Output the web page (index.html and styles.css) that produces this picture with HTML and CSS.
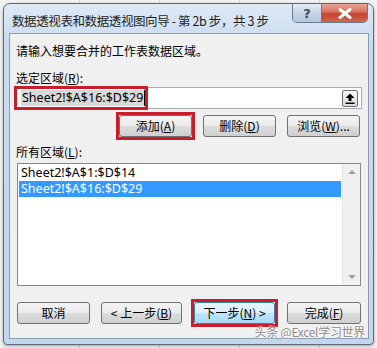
FILE: index.html
```html
<!DOCTYPE html>
<html lang="zh-CN">
<head>
    <meta charset="UTF-8">
    <title>数据透视表和数据透视图向导</title>
    <link rel="stylesheet" href="styles.css">
</head>
<body>
    <div class="window">
        <!-- Title bar with help and close buttons -->
        <div class="titlebar">
            <span class="title">数据透视表和数据透视图向导 - 第 2b 步，共 3 步</span>
            <div class="caption">
                <span class="cap-help">?</span>
                <span class="cap-close">
                    <svg width="14" height="11" viewBox="0 0 14 11"><path d="M2 1.5 L12 9.5 M12 1.5 L2 9.5" stroke="#fff" stroke-width="3" stroke-linecap="round"/></svg>
                </span>
            </div>
        </div>

        <div class="client">
            <p class="intro">请输入想要合并的工作表数据区域。</p>

            <div class="label">选定区域(<u>R</u>):</div>
            <div class="range-row">
                <div class="range-input">
                    <span class="sel">Sheet2!$A$16:$D$29</span><span class="caret"></span>
                    <span class="mark mark-input"></span>
                </div>
                <span class="pick">
                    <svg width="10" height="11" viewBox="0 0 10 11"><path d="M5 0.5 L9.5 5 H6.5 V8 H3.5 V5 H0.5 Z" fill="#000"/><rect x="0.5" y="9.5" width="9" height="1.5" fill="#000"/></svg>
                </span>
            </div>

            <div class="btn-row">
                <span class="mark-btn"><button class="btn">添加(<u>A</u>)</button></span>
                <button class="btn">删除(<u>D</u>)</button>
                <button class="btn">浏览(<u>W</u>)...</button>
            </div>

            <div class="label label-list">所有区域(<u>L</u>):</div>
            <div class="listbox">
                <div class="items">
                    <div class="item">Sheet2!$A$1:$D$14</div>
                    <div class="item selected">Sheet2!$A$16:$D$29</div>
                </div>
                <div class="scrollbar">
                    <span class="arrow up"></span>
                    <span class="arrow down"></span>
                </div>
            </div>

            <div class="footer">
                <button class="btn">取消</button>
                <button class="btn wide">&lt; 上一步(<u>B</u>)</button>
                <span class="mark-btn next"><button class="btn wide primary">下一步(<u>N</u>) &gt;</button></span>
                <button class="btn finish">完成(<u>F</u>)</button>
            </div>
        </div>

        <span class="watermark">头条 @Excel学习世界</span>
    </div>
</body>
</html>
```

FILE: styles.css
```css
/* Spreadsheet behind the dialog */
body {
    margin: 0;
    width: 377px;
    height: 348px;
    overflow: hidden;
    background-color: #f2f2f2;
    background-image: repeating-linear-gradient(90deg, transparent 0, transparent 79px, #d6d6d6 79px, #d6d6d6 80px);
    font-family: "Noto Sans CJK SC", sans-serif;
    font-size: 12px;
    color: #000;
}

/* Dialog frame */
.window {
    position: relative;
    box-sizing: border-box;
    width: 371px;
    height: 342px;
    margin: 3px 0 0 3px;
    border: 1px solid #5c6b7c;
    border-radius: 7px 7px 4px 4px;
    background: linear-gradient(#dfe9f5, #c9dbef 40px, #c4d7ee);
    padding: 0 4px 5px 5px;
    display: flex;
    flex-direction: column;
    box-shadow: 0 1px 3px rgba(0,0,0,0.35);
}

.titlebar {
    height: 29px;
    display: flex;
    align-items: flex-start;
    justify-content: space-between;
}

.title {
    font-size: 12.5px;
    line-height: 16px;
    margin: 9px 0 0 3px;
    color: #1e1e1e;
    white-space: nowrap;
    letter-spacing: -0.4px;
}

.caption {
    flex-shrink: 0;
    display: flex;
    margin-right: 1px;
    border: 1px solid #6b7b8f;
    border-top: none;
    border-radius: 0 0 5px 5px;
    overflow: hidden;
    height: 18px;
}

.cap-help {
    width: 28px;
    display: flex;
    align-items: center;
    justify-content: center;
    background: linear-gradient(#e4ecf6, #c6d4e6 50%, #b5c6dc);
    border-right: 1px solid #6b7b8f;
    font-family: "DejaVu Sans", sans-serif;
    font-weight: bold;
    font-size: 13px;
    color: #3d4a5c;
}

.cap-close {
    width: 45px;
    display: flex;
    align-items: center;
    justify-content: center;
    background: linear-gradient(#e9a596, #d4705e 45%, #c4422b 55%, #d06650);
}

/* Client area */
.client {
    flex: 1;
    border: 1px solid #8a9db6;
    background: #f0f0f0;
    padding: 8px 6px 14px 5px;
    display: flex;
    flex-direction: column;
}

.intro {
    margin: 0 0 0 1px;
    line-height: 17px;
}

.label {
    margin: 10px 0 0 1px;
    line-height: 17px;
}

.label-list {
    margin-top: 6px;
}

u {
    text-decoration: underline;
    text-underline-offset: 1px;
}

.range-row {
    position: relative;
    margin-top: 1px;
    height: 22px;
    box-sizing: border-box;
    border: 1px solid #a4a9b2;
    background: #fff;
    display: flex;
    align-items: center;
    justify-content: space-between;
}

.range-input {
    display: flex;
    align-items: center;
    padding-left: 5px;
    font-family: "Noto Sans", sans-serif;
    font-size: 12.5px;
}

.sel {
    background: #d9d9d9;
    line-height: 16px;
    padding: 0 1px;
}

.caret {
    width: 1px;
    height: 16px;
    background: #000;
}

/* Red highlight boxes */
.mark {
    position: absolute;
    border: 3px solid #c81e2c;
}

.mark-input {
    left: -2px;
    top: -2px;
    width: 128px;
    height: 18px;
}

.mark-btn {
    display: flex;
    flex-shrink: 0;
    border: 3px solid #c81e2c;
    margin: -3px;
}

.pick {
    width: 14px;
    height: 15px;
    margin-right: 3px;
    border: 1px solid #707070;
    border-radius: 2px;
    background: linear-gradient(#f6f6f6, #dcdcdc);
    display: flex;
    align-items: center;
    justify-content: center;
}

.btn-row {
    display: flex;
    justify-content: flex-end;
    gap: 11px;
    margin-top: 6px;
    padding-right: 2px;
}

.btn {
    flex-shrink: 0;
    width: 73px;
    height: 22px;
    padding: 0;
    border: 1px solid #707070;
    border-radius: 3px;
    background: linear-gradient(#f4f4f4, #ebebeb 50%, #dddddd 51%, #cfcfcf);
    font-family: "Noto Sans CJK SC", sans-serif;
    font-size: 12px;
    color: #000;
    line-height: 18px;
}

.btn.wide {
    width: 81px;
}

.btn.primary {
    border-color: #3c7fb1;
    background: linear-gradient(#eaf6fd, #d9f0fc 50%, #bee6fd 51%, #a7d9f5);
}

/* List of all ranges */
.listbox {
    margin: 3px 1px 0 2px;
    height: 123px;
    box-sizing: border-box;
    border: 1px solid #828790;
    background: #fff;
    display: flex;
}

.items {
    flex: 1;
    padding: 1px;
}

.item {
    height: 16px;
    line-height: 16px;
    padding-left: 2px;
    font-family: "Noto Sans", sans-serif;
    font-size: 12.5px;
}

.item.selected {
    background: #3399ff;
    color: #fff;
}

.scrollbar {
    width: 17px;
    background: #f0f0f0;
    border-left: 1px solid #e4e4e4;
    display: flex;
    flex-direction: column;
    justify-content: space-between;
    align-items: center;
    padding: 6px 0;
}

.arrow {
    width: 0;
    height: 0;
    border-left: 4px solid transparent;
    border-right: 4px solid transparent;
}

.arrow.up {
    border-bottom: 4px solid #a0a0a0;
}

.arrow.down {
    border-top: 4px solid #a0a0a0;
}

.footer {
    margin-top: auto;
    display: flex;
    gap: 11px;
    padding-left: 2px;
}

.footer .next {
    margin-left: -2px;
}

.footer .finish {
    width: 74px;
    margin-left: 1px;
}

/* Watermark in the lower right corner */
.watermark {
    position: absolute;
    right: 8px;
    bottom: 4px;
    font-size: 12px;
    color: #8c8c8c;
    text-shadow: 0 0 2px #fff, 0 0 2px #fff;
    letter-spacing: -0.3px;
}
```
